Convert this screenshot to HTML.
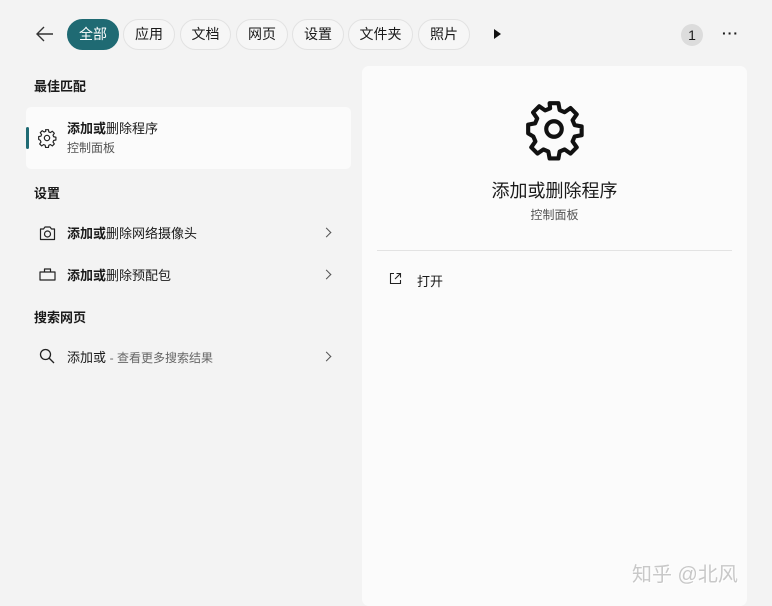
<!DOCTYPE html>
<html><head><meta charset="utf-8"><style>
*{margin:0;padding:0;box-sizing:border-box}
body{width:772px;height:602px;background:#f3f3f3;font-family:"Liberation Sans","Noto Sans CJK SC",sans-serif;color:#1a1a1a;position:relative;overflow:hidden}
.a{position:absolute;white-space:nowrap}
.chip{position:absolute;top:19px;height:31px;border:1px solid #e2e2e2;border-radius:16px;background:#f6f6f6;font-size:14px;line-height:29px;text-align:center;color:#1a1a1a}
.sel{background:#1f6a73;color:#fff;border-color:#1f6a73}
.h{font-size:13px;font-weight:bold;left:34px}
.it{font-size:13px;left:67px}
.it b{font-weight:bold}
.chev{position:absolute;left:323px;width:7px;height:7px;border-right:1.3px solid #555;border-top:1.3px solid #555;transform:rotate(45deg)}
</style></head><body>
<svg class="a" style="left:36px;top:26px" width="18" height="16" viewBox="0 0 18 16"><path d="M17 8H2M8 1L1 8l7 7" fill="none" stroke="#333" stroke-width="1.4"/></svg>
<div class="chip sel" style="left:67px;width:52px">全部</div>
<div class="chip" style="left:123px;width:52px">应用</div>
<div class="chip" style="left:180px;width:51px">文档</div>
<div class="chip" style="left:236px;width:52px">网页</div>
<div class="chip" style="left:292px;width:52px">设置</div>
<div class="chip" style="left:348px;width:65px">文件夹</div>
<div class="chip" style="left:418px;width:52px">照片</div>
<svg class="a" style="left:493px;top:28px" width="9" height="12"><path d="M1 1L8 6L1 11Z" fill="#111"/></svg>
<div class="a" style="left:681px;top:24px;width:22px;height:22px;border-radius:50%;background:#dcdcdc;font-size:14px;text-align:center;line-height:22px">1</div>
<div class="a" style="left:722px;top:25px;font-size:14px;font-weight:bold;letter-spacing:1px">···</div>

<div class="a h" style="top:76px">最佳匹配</div>
<div class="a" style="left:26px;top:107px;width:325px;height:62px;background:#fbfbfb;border-radius:5px"></div>
<div class="a" style="left:26px;top:127px;width:3px;height:22px;background:#1f6a73;border-radius:2px"></div>
<svg class="a" style="left:37px;top:128px" width="20" height="20" viewBox="0 0 24 24"><path d="M10.3 2h3.4l.5 2.7 1.9.8 2.3-1.6 2.4 2.4-1.6 2.3.8 1.9 2.7.5v3.4l-2.7.5-.8 1.9 1.6 2.3-2.4 2.4-2.3-1.6-1.9.8-.5 2.7h-3.4l-.5-2.7-1.9-.8-2.3 1.6-2.4-2.4 1.6-2.3-.8-1.9L2 13.7v-3.4l2.7-.5.8-1.9-1.6-2.3 2.4-2.4 2.3 1.6 1.9-.8z" fill="none" stroke="#222" stroke-width="1.4" stroke-linejoin="round"/><circle cx="12" cy="12" r="3.2" fill="none" stroke="#222" stroke-width="1.4"/></svg>
<div class="a it" style="top:118px"><b>添加或</b>删除程序</div>
<div class="a" style="left:67px;top:139px;font-size:12px;color:#555">控制面板</div>

<div class="a h" style="top:183px">设置</div>
<svg class="a" style="left:39px;top:225px" width="17" height="16" viewBox="0 0 17 16"><path d="M1.5 4h3l1.5-2h5l1.5 2h3v10.5h-14z" fill="none" stroke="#222" stroke-width="1.2" stroke-linejoin="round"/><circle cx="8.5" cy="9" r="3" fill="none" stroke="#222" stroke-width="1.2"/></svg>
<div class="a it" style="top:223px"><b>添加或</b>删除网络摄像头</div>
<div class="chev" style="top:229px"></div>
<svg class="a" style="left:39px;top:267px" width="17" height="14" viewBox="0 0 17 14"><path d="M1 5h15v8H1zM5.5 5V2h6v3" fill="none" stroke="#222" stroke-width="1.2" stroke-linejoin="round"/></svg>
<div class="a it" style="top:265px"><b>添加或</b>删除预配包</div>
<div class="chev" style="top:271px"></div>

<div class="a h" style="top:307px">搜索网页</div>
<svg class="a" style="left:39px;top:348px" width="16" height="16" viewBox="0 0 16 16"><circle cx="6.5" cy="6.5" r="5" fill="none" stroke="#222" stroke-width="1.3"/><path d="M10 10l5 5" stroke="#222" stroke-width="1.3"/></svg>
<div class="a" style="left:67px;top:347px;font-size:13px">添加或 <span style="font-size:12px;color:#666">- 查看更多搜索结果</span></div>
<div class="chev" style="top:353px"></div>

<div class="a" style="left:362px;top:66px;width:385px;height:540px;background:#fbfbfb;border-radius:7px"></div>
<svg class="a" style="left:523px;top:97px" width="62" height="64" viewBox="0 0 24 24"><path d="M10.3 2h3.4l.5 2.7 1.9.8 2.3-1.6 2.4 2.4-1.6 2.3.8 1.9 2.7.5v3.4l-2.7.5-.8 1.9 1.6 2.3-2.4 2.4-2.3-1.6-1.9.8-.5 2.7h-3.4l-.5-2.7-1.9-.8-2.3 1.6-2.4-2.4 1.6-2.3-.8-1.9L2 13.7v-3.4l2.7-.5.8-1.9-1.6-2.3 2.4-2.4 2.3 1.6 1.9-.8z" fill="none" stroke="#111" stroke-width="1.6" stroke-linejoin="round"/><circle cx="12" cy="12" r="3" fill="none" stroke="#111" stroke-width="1.6"/></svg>
<div class="a" style="left:362px;width:385px;text-align:center;top:177px;font-size:18px">添加或删除程序</div>
<div class="a" style="left:362px;width:385px;text-align:center;top:206px;font-size:12px;color:#555">控制面板</div>
<div class="a" style="left:377px;top:250px;width:355px;height:1px;background:#e3e3e3"></div>
<svg class="a" style="left:389px;top:272px" width="13" height="13" viewBox="0 0 13 13"><path d="M5 1.5H1.5v10h10V8M7.5 1.5h4v4M11.5 1.5L6 7" fill="none" stroke="#222" stroke-width="1.1"/></svg>
<div class="a" style="left:417px;top:271px;font-size:13px">打开</div>

<div class="a" style="left:632px;top:558px;font-size:20px;color:#c8c8c8;text-shadow:1px 1px 0 #fff">知乎 @北风</div>
</body></html>
